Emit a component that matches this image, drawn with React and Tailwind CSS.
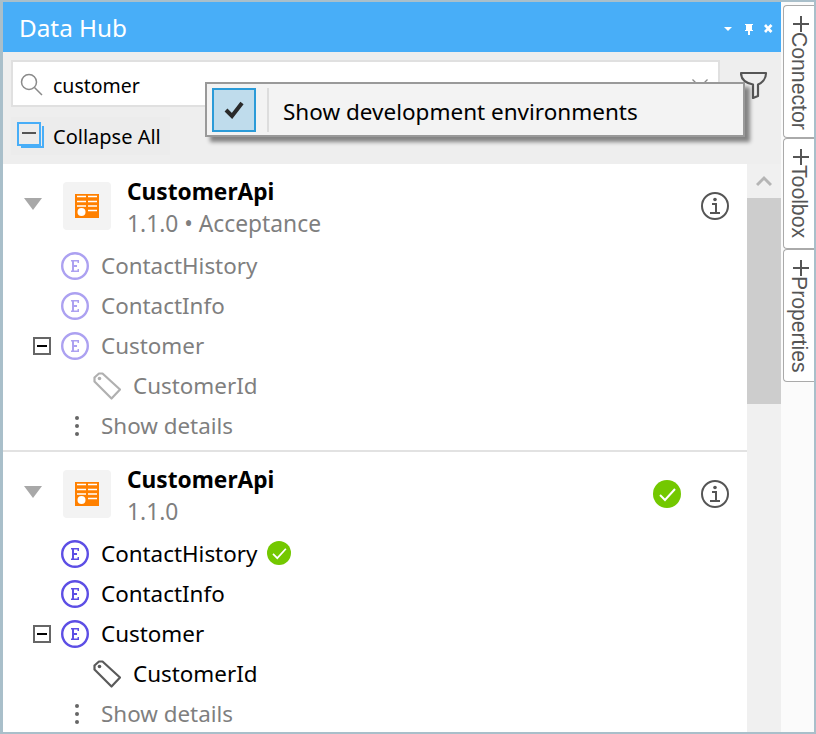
import React from 'react';

function EntityIcon({ faded }) {
    const color = faded ? '#aca1f1' : '#5c4ee5';
    return (
        <svg width="28" height="28" viewBox="0 0 28 28" fill="none" className="shrink-0">
            <circle cx="14" cy="14" r="12.8" stroke={color} strokeWidth="2.4" />
            <path d="M10 8h8v3h-1.500V9.500H13v3.500h3v2h-3v3.500h3.500V17H18v3h-8v-1.500h1v-9h-1z" fill={color} />
        </svg>
    );
}

function TagIcon({ faded }) {
    const color = faded ? '#b0b0b0' : '#5a5a5a';
    return (
        <svg width="28" height="28" viewBox="0 0 28 28" fill="none" className="shrink-0">
            <path d="M1.500 5.500L6 1.500h3.500L27 17.500 18.500 26.500 1.500 9.500z" stroke={color} strokeWidth="2.200" strokeLinejoin="round" />
            <circle cx="6.500" cy="6.500" r="1.800" fill={color} />
        </svg>
    );
}

function InfoIcon() {
    return (
        <svg width="28" height="28" viewBox="0 0 28 28" fill="none" className="shrink-0">
            <circle cx="14" cy="14" r="13" stroke="#555555" strokeWidth="2" />
            <circle cx="14" cy="7.500" r="1.800" fill="#555555" />
            <path d="M11 12h4v8M9 21h10" stroke="#555555" strokeWidth="2" />
        </svg>
    );
}

function CheckBadge({ size }) {
    return (
        <svg width={size} height={size} viewBox="0 0 28 28" className="shrink-0">
            <circle cx="14" cy="14" r="14" fill="#73c800" />
            <path d="M7 15l5 5 10-11" stroke="#ffffff" strokeWidth="2" fill="none" />
        </svg>
    );
}

function ApiIcon() {
    return (
        <div className="w-12 h-12 bg-[#f3f3f3] rounded-sm flex items-center justify-center shrink-0">
            <svg width="24" height="24" viewBox="0 0 24 24">
                <rect width="24" height="24" fill="#ff8000" />
                <path d="M2 2.500h9M13 2.500h9M2 7.500h9M13 7.500h9M2 12h9M13 12h9M13 16.500h9" stroke="#ffffff" strokeWidth="1.600" />
                <circle cx="6.500" cy="18" r="4" fill="#ffffff" />
            </svg>
        </div>
    );
}

function Row({ icon, label, faded, indent, toggle, children }) {
    return (
        <div className={`h-10 flex items-center ${indent ? 'pl-[90px]' : 'pl-[58px]'} relative`}>
            {toggle && (
                <span className="absolute left-[30px] top-[11px] w-[18px] h-[18px] border-2 border-[#666666] flex items-center justify-center">
                    <span className="w-[10px] h-[2px] bg-black"></span>
                </span>
            )}
            {icon}
            <span className={`ml-3 text-[22.4px] ${faded ? 'text-[#7f7f7f]' : 'text-black'}`}>{label}</span>
            {children}
        </div>
    );
}

function ShowDetails() {
    return (
        <div className="h-10 flex items-center pl-[58px]">
            <span className="w-7 flex flex-col items-center gap-[4px] pl-[4px]">
                <span className="w-1 h-1 rounded-full bg-[#666666]"></span>
                <span className="w-1 h-1 rounded-full bg-[#666666]"></span>
                <span className="w-1 h-1 rounded-full bg-[#666666]"></span>
            </span>
            <span className="ml-3 text-[22.4px] text-[#7f7f7f]">Show details</span>
        </div>
    );
}

function ApiCard({ version, faded, consumed }) {
    return (
        <div className="bg-white border-b-2 border-[#e2e2e2] h-[288px] pt-[18px]">
            <div className="flex items-start h-12 mb-4 pl-[21px] pr-[18px]">
                <svg width="18" height="12" viewBox="0 0 18 12" className="mt-[16px] mr-[21px] shrink-0">
                    <path d="M0 0h18L9 12z" fill="#a8a8a8" />
                </svg>
                <ApiIcon />
                <div className="ml-4 flex-1 -mt-[6px]">
                    <div className="text-[22.7px] leading-[32px] font-bold text-black">CustomerApi</div>
                    <div className="text-[22.8px] leading-8 text-[#7f7f7f]">{version}</div>
                </div>
                <div className="flex items-center gap-5 mt-[10px]">
                    {consumed && <CheckBadge size={28} />}
                    <InfoIcon />
                </div>
            </div>
            <Row icon={<EntityIcon faded={faded} />} label="ContactHistory" faded={faded}>
                {consumed && <span className="ml-[10px] -mt-[2px]"><CheckBadge size={24} /></span>}
            </Row>
            <Row icon={<EntityIcon faded={faded} />} label="ContactInfo" faded={faded} />
            <Row icon={<EntityIcon faded={faded} />} label="Customer" faded={faded} toggle />
            <Row icon={<TagIcon faded={faded} />} label="CustomerId" faded={faded} indent />
            <ShowDetails />
        </div>
    );
}

function SideTab({ label, height }) {
    return (
        <div className={`${height} w-[31px] bg-white border border-r-0 border-[#aaaaaa] rounded-l-[4px] pt-[10px] flex flex-col items-center text-[#555555]`}>
            <svg width="16" height="16" viewBox="0 0 16 16" stroke="#555555" strokeWidth="2" className="ml-[3px] shrink-0">
                <path d="M8 0v16M0 8h16" />
            </svg>
            <span className="font-['Liberation_Sans',sans-serif] text-[21.2px] leading-[28px] [writing-mode:vertical-rl]">{label}</span>
        </div>
    );
}

export default function App() {
    return (
        <div className="w-[816px] h-[734px] overflow-hidden relative flex border-t-2 border-b-2 border-r-2 border-l-[3px] border-[#a9bfca] bg-[#fbfbfb] font-['Noto_Sans',sans-serif]">
            <div className="w-[778px] h-full flex flex-col shrink-0">
                <div className="h-[50px] shrink-0 bg-[#48aef8] flex items-center pl-[16px] pr-2">
                    <span className="text-[24.3px] text-white flex-1 mt-[3px]">Data Hub</span>
                    <svg width="50" height="14" viewBox="0 0 50 14" fill="#ffffff" className="mt-[5px]">
                        <path d="M1 4h8L5 8z" />
                        <path d="M22 1h8v1h-1v5h1v1h-8V7h1V2h-1zM25 8h2v4h-2z" />
                        <path d="M41 3l2-2 2 2.500L47.500 1l2 2-2.500 2.500 2.500 2.500-2 2-2.500-2.500L43 10l-2-2 2.500-2.500z" />
                    </svg>
                </div>
                <div className="h-[112px] shrink-0 bg-[#eeeeee] pl-2 pt-2">
                    <div className="flex items-center">
                        <div className="w-[709px] h-[47px] bg-white border-2 border-[#e0e0e0] flex items-center pl-[6px] pr-[10px]">
                            <svg width="24" height="24" viewBox="0 0 24 24" fill="none" stroke="#8a8a8a" strokeWidth="1.500" className="shrink-0">
                                <circle cx="10" cy="10" r="7.500" />
                                <path d="M15.500 15.500L23 23" />
                            </svg>
                            <span className="ml-[10px] mt-[4px] text-[19.5px] text-black flex-1">customer</span>
                            <svg width="16" height="10" viewBox="0 0 16 10" fill="none" stroke="#888888" strokeWidth="1.300" className="shrink-0">
                                <path d="M0.500 0.500L8 8l7.500-7.500" />
                            </svg>
                        </div>
                        <svg width="28" height="28" viewBox="0 0 28 28" fill="none" stroke="#555555" strokeWidth="2.200" strokeLinejoin="round" className="ml-5 mt-[2px] shrink-0">
                            <path d="M1 2h25c0 6-4 10-8 11.500V25l-5 2V13.500C6 12 1 8 1 2z" />
                        </svg>
                    </div>
                    <div className="mt-[10px] w-[159px] h-[38px] bg-[#ececec] flex items-center pl-[6px]">
                        <svg width="28" height="28" viewBox="0 0 28 28" fill="none" className="shrink-0">
                            <path d="M26 4v21H4" stroke="#48aef8" strokeWidth="2" />
                            <rect x="1" y="1" width="22" height="22" stroke="#48aef8" strokeWidth="2" />
                            <path d="M5 11h14" stroke="#555555" strokeWidth="2" />
                        </svg>
                        <span className="ml-2 mt-[2px] text-[20px] text-black">Collapse All</span>
                    </div>
                </div>
                <div className="flex-1 flex min-h-0">
                    <div className="w-[744px] shrink-0">
                        <ApiCard version="1.1.0 • Acceptance" faded />
                        <ApiCard version="1.1.0" consumed />
                    </div>
                    <div className="w-[34px] shrink-0 bg-[#f0f0f0] flex flex-col">
                        <div className="h-[34px] shrink-0 flex items-center justify-center">
                            <svg width="16" height="12" viewBox="0 0 16 12" fill="none" stroke="#b5b5b5" strokeWidth="3">
                                <path d="M1 10l7-7 7 7" />
                            </svg>
                        </div>
                        <div className="h-[206px] bg-[#cdcdcd]"></div>
                    </div>
                </div>
            </div>
            <div className="flex-1 pt-[3px] pl-[2px] flex flex-col">
                <SideTab label="Connector" height="h-[133px]" />
                <SideTab label="Toolbox" height="h-[111px]" />
                <SideTab label="Properties" height="h-[133px]" />
            </div>
            <div className="absolute left-[202px] top-[80px] w-[540px] h-[55px] bg-[#f3f3f3] border-2 border-[#999999] shadow-[5px_5px_4px_rgba(0,0,0,0.45)] flex items-center pl-[5px]">
                <div className="w-[44px] h-[44px] bg-[#bfdcec] border-2 border-[#2b9bd8] flex items-center justify-center shrink-0">
                    <svg width="20" height="18" viewBox="0 0 20 18" fill="none" stroke="#2a2a2a" strokeWidth="4">
                        <path d="M2 9l6 6L18 2" />
                    </svg>
                </div>
                <div className="ml-[11px] w-[2px] h-[44px] bg-[#dddddd] shrink-0"></div>
                <span className="ml-[14px] mt-[4px] text-[22.5px] text-black">Show development environments</span>
            </div>
        </div>
    );
}
